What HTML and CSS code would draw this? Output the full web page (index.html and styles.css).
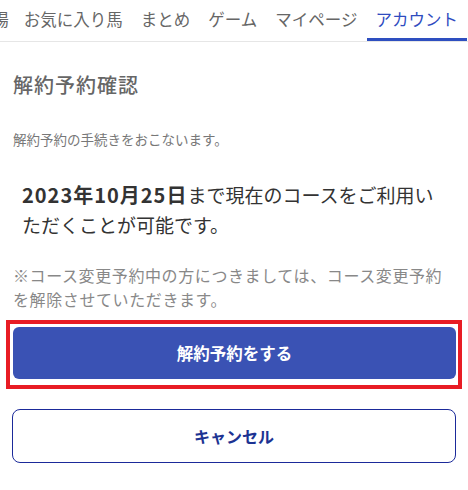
FILE: index.html
```html
<!DOCTYPE html>
<html lang="ja">
<head>
<meta charset="utf-8">
<title>解約予約確認</title>
<link rel="stylesheet" href="styles.css">
</head>
<body>
<nav class="tabs">
  <a class="tab tab-first">競馬場</a>
  <a class="tab">お気に入り馬</a>
  <a class="tab">まとめ</a>
  <a class="tab">ゲーム</a>
  <a class="tab">マイページ</a>
  <a class="tab active">アカウント</a>
</nav>
<main class="content">
  <h1 class="title">解約予約確認</h1>
  <p class="lead">解約予約の手続きをおこないます。</p>
  <p class="info"><strong class="date">2023年10月25日</strong>まで現在のコースをご利用いただくことが可能です。</p>
  <p class="note">※コース変更予約中の方につきましては、コース変更予約を解除させていただきます。</p>
  <div class="highlight">
    <button class="btn btn-primary" type="button">解約予約をする</button>
  </div>
  <button class="btn btn-outline" type="button">キャンセル</button>
</main>
</body>
</html>
```

FILE: styles.css
```css
* { box-sizing: border-box; }
html, body { margin: 0; padding: 0; background: #fff; }
body {
  font-family: "Noto Sans CJK JP", "Noto Sans", sans-serif;
  color: #333;
  width: 468px;
}
.tabs {
  display: flex;
  justify-content: flex-end;
  overflow: hidden;
  height: 42px;
  border-bottom: 1px solid #e6e6e6;
  padding-right: 1px;
}
.tab {
  flex-shrink: 0;
  white-space: nowrap;
  height: 41px;
  display: flex;
  align-items: center;
  padding: 0 9px;
  font-size: 16.5px;
  line-height: 1;
  color: #666;
  border-bottom: 3px solid transparent;
}
.tab-first { padding-right: 6px; }
.tab.active {
  color: #2f4cbf;
  border-bottom-color: #2e4fc0;
}
.content {
  padding: 0 13px;
}
.title {
  margin: 29px 0 0;
  font-size: 20px;
  line-height: 28px;
  font-weight: 500;
  color: #666;
  letter-spacing: 1px;
}
.lead {
  margin: 29.5px 0 0;
  font-size: 13.5px;
  line-height: 20px;
  color: #777;
}
.info {
  margin: 31.5px 0 0;
  padding: 0 18px 0 9px;
  font-size: 19px;
  line-height: 30px;
  color: #333;
}
.date {
  font-weight: 700;
  font-size: 20px;
  letter-spacing: 1px;
}
.note {
  margin: 23px 0 0;
  font-size: 16px;
  line-height: 24px;
  color: #888;
  letter-spacing: 0.6px;
}
.highlight {
  margin: 9px -7px 0;
  border: 4px solid #e81c24;
  padding: 3px 2px 6px 3px;
}
.btn {
  display: flex;
  align-items: center;
  justify-content: center;
  width: 100%;
  font-family: inherit;
  font-weight: 700;
  font-size: 16.5px;
  cursor: pointer;
}
.btn-primary {
  height: 52px;
  border: none;
  border-radius: 6px;
  background: #3a52b4;
  color: #fff;
}
.btn-outline {
  margin: 20px -1px 0;
  width: calc(100% + 2px);
  height: 54px;
  border: 1px solid #1b2a9a;
  border-radius: 8px;
  background: #fff;
  color: #1c3392;
  font-size: 16px;
}
```
